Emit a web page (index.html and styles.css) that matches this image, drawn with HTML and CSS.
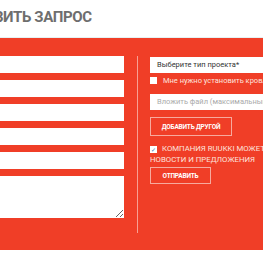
FILE: index.html
```html
<!DOCTYPE html>
<html lang="ru">
<head>
    <meta charset="UTF-8">
    <meta name="viewport" content="width=device-width, initial-scale=1.0">
    <title>Оставить запрос</title>
    <link rel="stylesheet" href="styles.css">
</head>
<body>
    <h2 class="title">ОСТАВИТЬ ЗАПРОС</h2>
    <div class="band">
        <form class="form">
            <div class="col-left">
                <input type="text" placeholder="Имя*">
                <input type="text" placeholder="Фамилия*">
                <input type="text" placeholder="Телефон*">
                <div class="pair">
                    <input type="text" class="small" placeholder="Почтовый индекс">
                    <input type="text" placeholder="Город*">
                </div>
                <div class="pair">
                    <input type="text" class="small" placeholder="Страна*">
                    <input type="text" placeholder="Эл. адрес*">
                </div>
                <textarea placeholder="Описание проекта"></textarea>
            </div>
            <div class="col-right">
                <div class="select">Выберите тип проекта*</div>
                <label class="check"><span class="box"></span>Мне нужно установить кровлю</label>
                <div class="file">Вложить файл (максимальный размер 5 МБ)</div>
                <button type="button" class="btn btn-add">ДОБАВИТЬ ДРУГОЙ</button>
                <label class="agree"><span class="box checked">✓</span>Компания Ruukki может отправлять мне новости и предложения</label>
                <button type="button" class="btn btn-send">ОТПРАВИТЬ</button>
            </div>
        </form>
    </div>
</body>
</html>
```

FILE: styles.css
```css
*{
  margin: 0;
  padding: 0;
  box-sizing: border-box;
  font-family: Roboto, "Liberation Sans", sans-serif;
}

html, body{
  overflow: hidden;
}

body{
  width: 263px;
  height: 260px;
  background-color: #fff;
}

.title{
  margin-left: -43px;
  padding-top: 8px;
  height: 38px;
  font-size: 15px;
  font-weight: 700;
  letter-spacing: -0.4px;
  color: #6e6e6e;
  white-space: nowrap;
  border-bottom: 1px solid #e6f1f3;
}

.band{
  height: 212px;
  padding-top: 18px;
  background-color: #f03e27;
}

.form{
  display: flex;
  align-items: flex-start;
  margin-left: -130px;
}

.col-left{
  width: 254px;
  flex: none;
  display: flex;
  flex-direction: column;
  gap: 7px;
}

input, textarea{
  display: block;
  width: 100%;
  height: 17px;
  padding: 0 7px;
  border: none;
  background-color: #fff;
  font-size: 7.5px;
  color: #333;
}

input::placeholder, textarea::placeholder{
  color: #a5a5a5;
}

.pair{
  display: flex;
  gap: 6px;
}

.pair .small{
  width: 77px;
  flex: none;
}

textarea{
  height: 42px;
  padding: 6px 7px;
  resize: vertical;
}

.col-right{
  width: 240px;
  flex: none;
  height: 177px;
  margin-left: 13px;
  padding-left: 12px;
  border-left: 1px solid rgba(255, 255, 255, 0.5);
  color: #fff;
  font-size: 7.5px;
}

.select{
  height: 16px;
  margin-top: 1px;
  padding: 0 7px;
  line-height: 16px;
  background-color: #fff;
  color: #333;
}

.check{
  display: flex;
  align-items: center;
  gap: 6px;
  height: 8px;
  margin-top: 3px;
  color: #fde3de;
}

.box{
  display: inline-block;
  width: 7px;
  height: 7px;
  flex: none;
  background-color: #fff;
}

.file{
  height: 16px;
  margin-top: 10px;
  padding: 0 7px;
  line-height: 16px;
  background-color: #fff;
  color: #aaa;
}

.btn{
  display: block;
  border: 1px solid #f7aa9e;
  background: transparent;
  color: #fff;
  font-size: 6.5px;
  font-weight: 700;
  letter-spacing: -0.2px;
  cursor: pointer;
}

.btn-add{
  width: 82px;
  height: 19px;
  margin-top: 7px;
}

.agree{
  display: block;
  width: 200px;
  margin-top: 7px;
  line-height: 11px;
  font-size: 7.8px;
  text-transform: uppercase;
  color: #fde3de;
}

.agree .checked{
  margin-right: 5px;
  font-size: 6px;
  line-height: 7px;
  text-align: center;
  color: #3a6fb0;
  vertical-align: -1px;
}

.btn-send{
  width: 61px;
  height: 17px;
  margin-top: 2px;
}
```
